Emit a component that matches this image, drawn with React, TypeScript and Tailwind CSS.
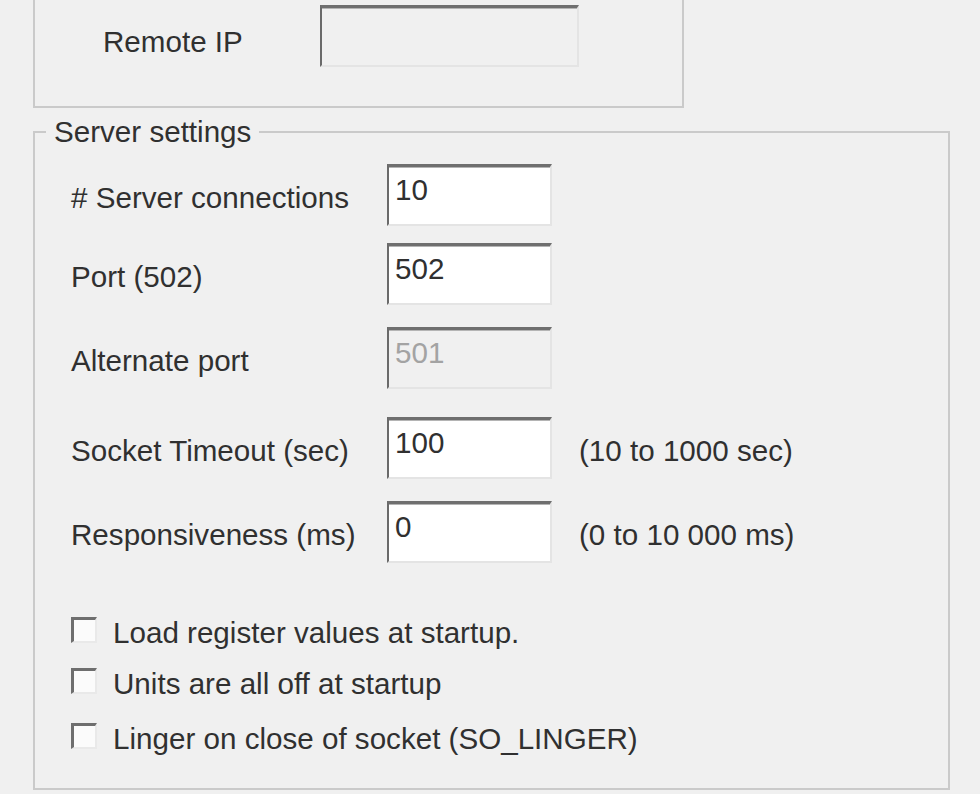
const rows = [
  { label: '# Server connections', value: '10', mt: 'mt-[17px]' },
  { label: 'Port (502)', value: '502', mt: 'mt-[17px]' },
  { label: 'Alternate port', value: '501', mt: 'mt-[22px]', disabled: true },
  { label: 'Socket Timeout (sec)', value: '100', mt: 'mt-[28px]', hint: '(10 to 1000 sec)' },
  { label: 'Responsiveness (ms)', value: '0', mt: 'mt-[22px]', hint: '(0 to 10 000 ms)' },
]

const checks = [
  { label: 'Load register values at startup.', mt: 'mt-[49px]' },
  { label: 'Units are all off at startup', mt: 'mt-[15px]' },
  { label: 'Linger on close of socket (SO_LINGER)', mt: 'mt-[19px]' },
]

function EditBox({ value, disabled, className }: { value: string; disabled?: boolean; className: string }) {
  return (
    <div
      className={`${className} border-t-[3px] border-l-2 border-r-2 border-b-2 border-t-[#6f6f6f] border-l-[#6a6a6a] border-r-[#e4e4e4] border-b-[#e4e4e4] shadow-[inset_0_1px_0_#b4b4b4] pl-[6px] pt-[8px] leading-[30px] ${
        disabled ? 'bg-[#f0f0f0] text-[#a3a3a3]' : 'bg-white'
      }`}
    >
      {value}
    </div>
  )
}

function CheckBox() {
  return (
    <div className="w-[26px] h-[26px] shrink-0 border-t-[3px] border-l-[3px] border-r-2 border-b-2 border-t-[#6e6e6e] border-l-[#6e6e6e] border-r-[#e9e9e9] border-b-[#e9e9e9] bg-[#fbfbfb]" />
  )
}

export default function App() {
  return (
    <div className="w-[980px] h-[794px] overflow-hidden bg-[#f0f0f0] pl-[33px] text-[29.6px] text-[#303030] font-['Liberation_Sans',Arial,sans-serif]">
      {/* connection group, cut off at the top */}
      <div className="w-[651px] h-[108px] border-x-2 border-b-2 border-[#cacaca] pl-[68px] pt-[5px] flex items-start">
        <div className="w-[217px] pt-[22px] leading-[30px] whitespace-nowrap">Remote IP</div>
        <EditBox value="" disabled className="w-[259px] h-[62px]" />
      </div>

      <fieldset className="mt-[9px] w-[917px] h-[673px] border-2 border-[#cacaca]">
        <legend className="ml-[11px] px-[8px] leading-[30px] whitespace-nowrap">Server settings</legend>

        <div className="pl-[36px]">
          {rows.map((r) => (
            <div key={r.label} className={`${r.mt} flex items-center`}>
              <div className="w-[316px] pt-[6px] leading-[30px] whitespace-nowrap">{r.label}</div>
              <EditBox value={r.value} disabled={r.disabled} className="w-[165px] h-[62px]" />
              {r.hint && <div className="ml-[27px] pt-[6px] leading-[30px] whitespace-nowrap">{r.hint}</div>}
            </div>
          ))}

          {checks.map((c) => (
            <div key={c.label} className={`${c.mt} flex items-center`}>
              <CheckBox />
              <div className="ml-[16px] pt-[6px] leading-[30px] whitespace-nowrap">{c.label}</div>
            </div>
          ))}
        </div>
      </fieldset>
    </div>
  )
}
